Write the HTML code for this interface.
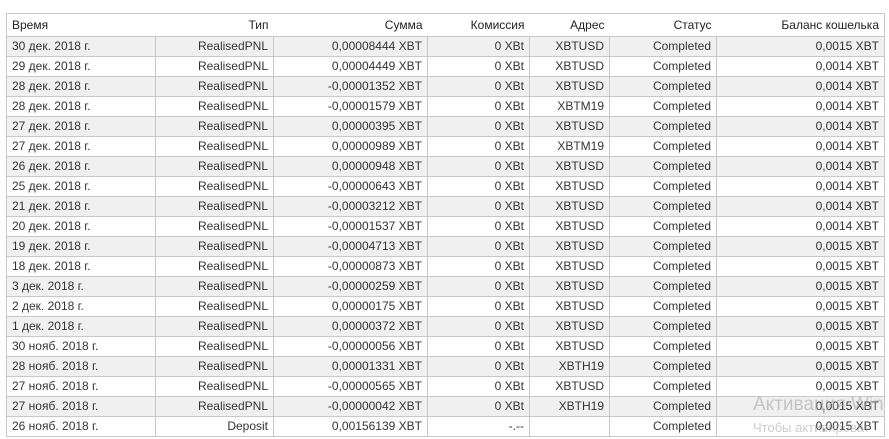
<!DOCTYPE html>
<html><head><meta charset="utf-8"><style>
body{margin:0;background:#fff;width:889px;height:439px;overflow:hidden;position:relative;font-family:"Liberation Sans","DejaVu Sans",sans-serif;font-size:12px;color:#333}
table{position:absolute;left:6px;top:13px;border-collapse:collapse;table-layout:fixed;width:878px;border:1px solid #c8c8c8}
td,th{height:19px;padding:0 5px;text-align:right;white-space:nowrap;border:1px solid #c8c8c8;line-height:19px}
th{font-weight:normal;height:22px;border-left:none;border-right:none;color:#222}
td:first-child,th:first-child{text-align:left}
tbody tr:nth-child(odd){background:#f0f0f0}
.w1{position:absolute;left:753px;top:394px;font-size:19px;color:rgba(160,160,160,0.55)}
.w2{position:absolute;left:753px;top:420px;font-size:13px;color:rgba(160,160,160,0.55)}
</style></head><body>
<table>
<colgroup><col style="width:149px"><col style="width:118px"><col style="width:154px"><col style="width:102px"><col style="width:80px"><col style="width:107px"><col style="width:168px"></colgroup>
<thead><tr><th>Время</th><th>Тип</th><th>Сумма</th><th>Комиссия</th><th>Адрес</th><th>Статус</th><th>Баланс кошелька</th></tr></thead>
<tbody>
<tr><td>30 дек. 2018 г.</td><td>RealisedPNL</td><td>0,00008444 XBT</td><td>0 XBt</td><td>XBTUSD</td><td>Completed</td><td>0,0015 XBT</td></tr>
<tr><td>29 дек. 2018 г.</td><td>RealisedPNL</td><td>0,00004449 XBT</td><td>0 XBt</td><td>XBTUSD</td><td>Completed</td><td>0,0014 XBT</td></tr>
<tr><td>28 дек. 2018 г.</td><td>RealisedPNL</td><td>-0,00001352 XBT</td><td>0 XBt</td><td>XBTUSD</td><td>Completed</td><td>0,0014 XBT</td></tr>
<tr><td>28 дек. 2018 г.</td><td>RealisedPNL</td><td>-0,00001579 XBT</td><td>0 XBt</td><td>XBTM19</td><td>Completed</td><td>0,0014 XBT</td></tr>
<tr><td>27 дек. 2018 г.</td><td>RealisedPNL</td><td>0,00000395 XBT</td><td>0 XBt</td><td>XBTUSD</td><td>Completed</td><td>0,0014 XBT</td></tr>
<tr><td>27 дек. 2018 г.</td><td>RealisedPNL</td><td>0,00000989 XBT</td><td>0 XBt</td><td>XBTM19</td><td>Completed</td><td>0,0014 XBT</td></tr>
<tr><td>26 дек. 2018 г.</td><td>RealisedPNL</td><td>0,00000948 XBT</td><td>0 XBt</td><td>XBTUSD</td><td>Completed</td><td>0,0014 XBT</td></tr>
<tr><td>25 дек. 2018 г.</td><td>RealisedPNL</td><td>-0,00000643 XBT</td><td>0 XBt</td><td>XBTUSD</td><td>Completed</td><td>0,0014 XBT</td></tr>
<tr><td>21 дек. 2018 г.</td><td>RealisedPNL</td><td>-0,00003212 XBT</td><td>0 XBt</td><td>XBTUSD</td><td>Completed</td><td>0,0014 XBT</td></tr>
<tr><td>20 дек. 2018 г.</td><td>RealisedPNL</td><td>-0,00001537 XBT</td><td>0 XBt</td><td>XBTUSD</td><td>Completed</td><td>0,0014 XBT</td></tr>
<tr><td>19 дек. 2018 г.</td><td>RealisedPNL</td><td>-0,00004713 XBT</td><td>0 XBt</td><td>XBTUSD</td><td>Completed</td><td>0,0015 XBT</td></tr>
<tr><td>18 дек. 2018 г.</td><td>RealisedPNL</td><td>-0,00000873 XBT</td><td>0 XBt</td><td>XBTUSD</td><td>Completed</td><td>0,0015 XBT</td></tr>
<tr><td>3 дек. 2018 г.</td><td>RealisedPNL</td><td>-0,00000259 XBT</td><td>0 XBt</td><td>XBTUSD</td><td>Completed</td><td>0,0015 XBT</td></tr>
<tr><td>2 дек. 2018 г.</td><td>RealisedPNL</td><td>0,00000175 XBT</td><td>0 XBt</td><td>XBTUSD</td><td>Completed</td><td>0,0015 XBT</td></tr>
<tr><td>1 дек. 2018 г.</td><td>RealisedPNL</td><td>0,00000372 XBT</td><td>0 XBt</td><td>XBTUSD</td><td>Completed</td><td>0,0015 XBT</td></tr>
<tr><td>30 нояб. 2018 г.</td><td>RealisedPNL</td><td>-0,00000056 XBT</td><td>0 XBt</td><td>XBTUSD</td><td>Completed</td><td>0,0015 XBT</td></tr>
<tr><td>28 нояб. 2018 г.</td><td>RealisedPNL</td><td>0,00001331 XBT</td><td>0 XBt</td><td>XBTH19</td><td>Completed</td><td>0,0015 XBT</td></tr>
<tr><td>27 нояб. 2018 г.</td><td>RealisedPNL</td><td>-0,00000565 XBT</td><td>0 XBt</td><td>XBTUSD</td><td>Completed</td><td>0,0015 XBT</td></tr>
<tr><td>27 нояб. 2018 г.</td><td>RealisedPNL</td><td>-0,00000042 XBT</td><td>0 XBt</td><td>XBTH19</td><td>Completed</td><td>0,0015 XBT</td></tr>
<tr><td>26 нояб. 2018 г.</td><td>Deposit</td><td>0,00156139 XBT</td><td>-.--</td><td></td><td>Completed</td><td>0,0015 XBT</td></tr>
</tbody></table>
<div class="w1">Активация Win</div>
<div class="w2">Чтобы активироват</div>
</body></html>
